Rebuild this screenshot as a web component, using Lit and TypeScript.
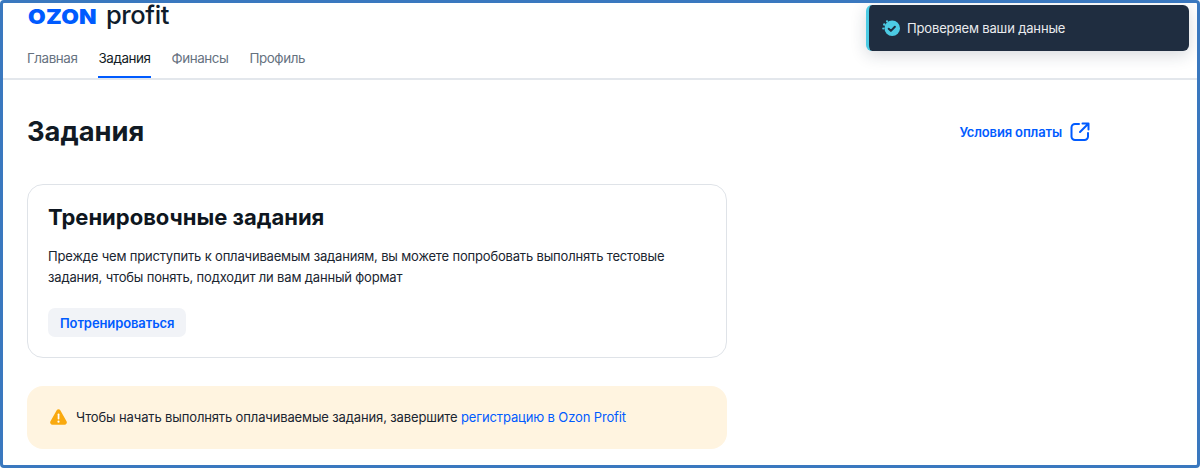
import { LitElement, html, css } from "lit";
import { customElement } from "lit/decorators.js";

@customElement("app-root")
export class AppRoot extends LitElement {
  static styles = css`
    :host { display: block; }
    * { box-sizing: border-box; }
    .frame {
      position: relative; width: 1200px; height: 468px; overflow: hidden;
      border: 3px solid #3a78bf; border-radius: 4px; background: #fff;
      font-family: Inter, "Noto Sans", sans-serif; color: #111a24;
    }
    .header { padding: 0 0 0 24px; border-bottom: 2px solid #e3e7ec; height: 77px; }
    .logo { display: flex; align-items: baseline; height: 31px; gap: 8px; padding-left: 1px; }
    .ozon { display: inline-block; width: 70px; font-size: 20px; font-weight: 900; color: #005bff; letter-spacing: 0.2px; line-height: 24px; transform: scaleX(1.14); transform-origin: left center; }
    .profit { font-size: 25.500px; font-weight: 500; color: #0f1c2b; line-height: 24px; letter-spacing: -0.4px; }
    .tabs { display: flex; gap: 21px; }
    .tab { font-size: 13.400px; letter-spacing: -0.42px; color: #66727f; height: 44px; display: flex; align-items: center; padding-top: 5px; border-bottom: 2px solid transparent; }
    .tab.active { color: #111a24; border-bottom-color: #005bff; }
    .main { padding: 0 24px; }
    .head { display: flex; justify-content: space-between; align-items: center; height: 104px; padding-right: 83px; }
    h1 { margin: 0 0 2px; font-size: 27.300px; font-weight: 700; color: #111a24; }
    .terms { display: flex; align-items: center; gap: 8px; color: #005bff; font-size: 13px; letter-spacing: -0.14px; font-weight: 600; }
    .terms svg { display: block; }
    .card { width: 700px; height: 174px; border: 1px solid #dfe3e8; border-radius: 16px; padding: 17px 20px; }
    h2 { margin: 0; font-size: 22px; font-weight: 700; line-height: 30px; color: #0e1620; }
    .card p { margin: 14px 0 0; font-size: 13px; letter-spacing: -0.17px; line-height: 21px; color: #1a2530; }
    .btn { display: inline-flex; align-items: center; height: 29px; margin-top: 20px; padding: 0 12px; background: #f1f3f7; border-radius: 7px; color: #005bff; font-size: 13px; letter-spacing: -0.1px; font-weight: 600; }
    .banner { display: flex; align-items: center; gap: 9px; width: 700px; height: 63px; margin-top: 28px; padding: 0 0 1px 23px; background: #fff4e0; border-radius: 16px; font-size: 13px; letter-spacing: -0.135px; color: #1a2530; }
    .banner a { color: #005bff; text-decoration: none; }
    .banner svg { display: block; }
    .toast {
      position: absolute; top: 2px; left: 863px; width: 323px; height: 46px; display: flex; align-items: center; gap: 7px;
      padding-left: 13px; background: #1f2d40; border-left: 3px solid #4ccbe4; border-radius: 6px;
      color: #e9ebee; font-size: 13px; letter-spacing: -0.15px; box-shadow: 0 4px 16px rgba(30,45,65,.18);
    }
    .toast svg { display: block; }
  `;

  render() {
    return html`
      <div class="frame">
        <div class="header">
          <div class="logo"><span class="ozon">OZON</span><span class="profit">profit</span></div>
          <div class="tabs">
            <div class="tab">Главная</div>
            <div class="tab active">Задания</div>
            <div class="tab">Финансы</div>
            <div class="tab">Профиль</div>
          </div>
        </div>
        <div class="main">
          <div class="head">
            <h1>Задания</h1>
            <div class="terms">
              <span>Условия оплаты</span>
              <svg width="20" height="20" viewBox="0 0 20 20" fill="none" stroke="#005bff" stroke-width="2" stroke-linecap="round" stroke-linejoin="round">
                <path d="M9 2H5a3.5 3.5 0 0 0-3.5 3.5v9A3.5 3.5 0 0 0 5 18h9.5a3.5 3.5 0 0 0 3.5-3.5V11" />
                <path d="M12.5 1.5h6v6M18 2l-8 8" />
              </svg>
            </div>
          </div>
          <div class="card">
            <h2>Тренировочные задания</h2>
            <p>Прежде чем приступить к оплачиваемым заданиям, вы можете попробовать выполнять тестовые<br />задания, чтобы понять, подходит ли вам данный формат</p>
            <div class="btn">Потренироваться</div>
          </div>
          <div class="banner">
            <svg width="17" height="16" viewBox="0 0 17 16">
              <path d="M6.7 1.2a2.1 2.1 0 0 1 3.6 0l6.2 11a2.4 2.4 0 0 1-2 3.6H2.500a2.4 2.4 0 0 1-2-3.600z" fill="#f9a90f" />
              <rect x="7.700" y="4.500" width="1.700" height="6" rx=".8" fill="#fff" />
              <circle cx="8.500" cy="12.700" r="1.100" fill="#fff" />
            </svg>
            <span>Чтобы начать выполнять оплачиваемые задания, завершите <a>регистрацию в Ozon Profit</a></span>
          </div>
        </div>
        <div class="toast">
          <svg width="18" height="18" viewBox="0 0 18 18">
            <circle cx="10.200" cy="9.300" r="7.800" fill="#4ccbe4" />
            <circle cx="2.300" cy="5.500" r="1.200" fill="#4ccbe4" />
            <circle cx="1.200" cy="9.500" r="1" fill="#4ccbe4" />
            <circle cx="5" cy="2.300" r="1.100" fill="#4ccbe4" />
            <path d="M6.700 9.700l2.200 2.200 4-4.200" fill="none" stroke="#1f2d40" stroke-width="2" stroke-linecap="round" stroke-linejoin="round" />
          </svg>
          <span>Проверяем ваши данные</span>
        </div>
      </div>
    `;
  }
}
